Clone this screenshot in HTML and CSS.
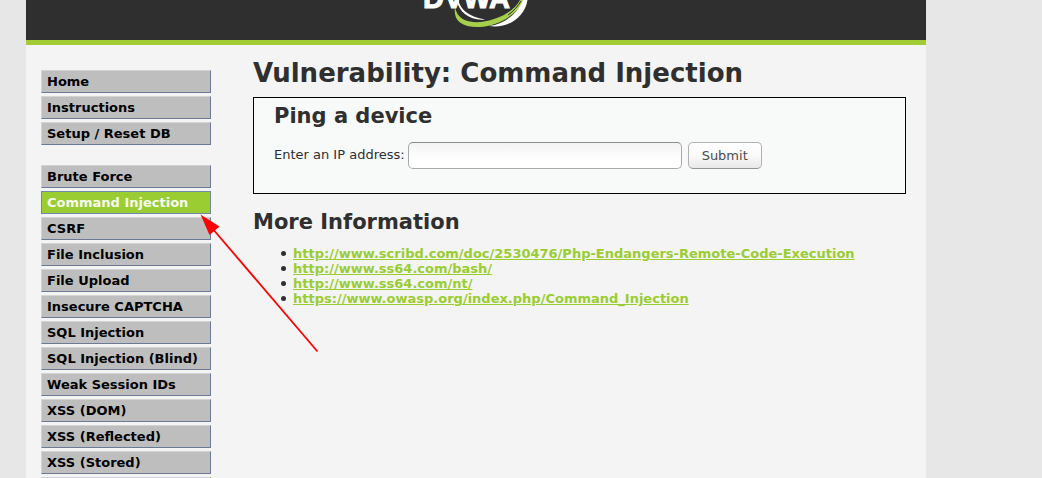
FILE: index.html
```html
<!DOCTYPE html>
<html lang="en">
<head>
<meta charset="utf-8">
<title>Vulnerability: Command Injection</title>
<link rel="stylesheet" href="styles.css">
</head>
<body>
<div class="container">
  <header class="header">
    <svg class="logo" width="110" height="30" viewBox="420 0 110 30" role="img" aria-label="DVWA">
      <text class="logo-text" x="422" y="8">DVWA</text>
      <path d="M458.500 0 C461 7 464 11 469 14" fill="none" stroke="#2f2f2f" stroke-width="1"/>
      <path d="M457 0 C460 10 468 17 484 19.500 C470 21 458 13 455.500 0 Z" fill="#fff"/>
      <path d="M454 7 C456 19 466 23 480 22 C498 20 513 11 519 0 L524 0 C515 15 498 26 478 27 C460 27.500 452 20 454 7 Z" fill="#a6cf4c"/>
      <path d="M488 26 C504 24 517 13 522 0 L526.500 0 C524 17 507 29 488 26 Z" fill="#fff"/>
      <path d="M507 15 C513 11 517 6 520 1" fill="none" stroke="#2f2f2f" stroke-width="1"/>
    </svg>
  </header>
  <div class="body">
    <nav class="menu">
      <ul class="menu-group">
        <li><a class="menu-item" href="#">Home</a></li>
        <li><a class="menu-item" href="#">Instructions</a></li>
        <li><a class="menu-item" href="#">Setup / Reset DB</a></li>
      </ul>
      <ul class="menu-group">
        <li><a class="menu-item" href="#">Brute Force</a></li>
        <li><a class="menu-item selected" href="#">Command Injection</a></li>
        <li><a class="menu-item" href="#">CSRF</a></li>
        <li><a class="menu-item" href="#">File Inclusion</a></li>
        <li><a class="menu-item" href="#">File Upload</a></li>
        <li><a class="menu-item" href="#">Insecure CAPTCHA</a></li>
        <li><a class="menu-item" href="#">SQL Injection</a></li>
        <li><a class="menu-item" href="#">SQL Injection (Blind)</a></li>
        <li><a class="menu-item" href="#">Weak Session IDs</a></li>
        <li><a class="menu-item" href="#">XSS (DOM)</a></li>
        <li><a class="menu-item" href="#">XSS (Reflected)</a></li>
        <li><a class="menu-item" href="#">XSS (Stored)</a></li>
        <li><a class="menu-item" href="#" aria-label="More"></a></li>
      </ul>
    </nav>
    <main class="main">
      <h1>Vulnerability: Command Injection</h1>
      <section class="panel">
        <h2>Ping a device</h2>
        <form class="form">
          <label for="ip">Enter an IP address:</label>
          <input class="field" id="ip" type="text">
          <button class="submit" type="submit">Submit</button>
        </form>
      </section>
      <h2>More Information</h2>
      <ul class="links">
        <li><a href="#">http://www.scribd.com/doc/2530476/Php-Endangers-Remote-Code-Execution</a></li>
        <li><a href="#">http://www.ss64.com/bash/</a></li>
        <li><a href="#">http://www.ss64.com/nt/</a></li>
        <li><a href="#">https://www.owasp.org/index.php/Command_Injection</a></li>
      </ul>
    </main>
  </div>
</div>
<svg class="arrow" width="120" height="140" viewBox="200 214 120 140" aria-hidden="true">
  <path d="M212 228 L317.500 351.500" stroke="#f00" stroke-width="1.800"/>
  <path d="M200.500 214.500 L219.500 226.500 L209.500 235 Z" fill="#f00"/>
</svg>
</body>
</html>
```
FILE: styles.css
```css
* {
  box-sizing: border-box;
}

html {
  height: 100%;
}

body {
  height: 100%;
  margin: 0;
  overflow: hidden;
  background: #e7e7e7;
  color: #2f2f2f;
  font: 13px/15px "DejaVu Sans", Verdana, sans-serif;
}

ul {
  margin: 0;
  padding: 0;
  list-style: none;
}

.container {
  max-width: 900px;
  min-height: 100%;
  margin-left: 26px;
  background: #f4f4f4;
}

.header {
  display: flex;
  justify-content: center;
  padding-bottom: 10px;
  border-bottom: 5px solid #a1cc33;
  background: #2f2f2f;
}

.logo-text {
  font: bold 29px "Liberation Sans", Arial, sans-serif;
  fill: #fff;
  stroke: #fff;
  stroke-width: 1px;
}

.body {
  display: flex;
  gap: 42px;
  padding: 13px 20px 0 15px;
}

.menu {
  display: flex;
  flex: 0 0 170px;
  flex-direction: column;
  gap: 20px;
  padding-top: 12px;
}

.menu-group {
  display: flex;
  flex-direction: column;
  gap: 3px;
}

.menu-item {
  display: block;
  min-height: 23px;
  padding: 3px 5px;
  border: 1px solid;
  border-color: #d3d3d3 #6b7a95 #6b7a95 #d3d3d3;
  background: #bebebe;
  color: #000;
  font-weight: bold;
  text-decoration: none;
}

.menu-item.selected {
  border-color: #7088a8;
  background: #9acd32;
  color: #f8faf0;
}

.main {
  flex: 1;
  min-width: 0;
}

h1 {
  margin: 0 0 9px;
  font-size: 26px;
  line-height: 30px;
}

h2 {
  margin: 0 0 12px;
  font-size: 21px;
  line-height: 24px;
}

.panel {
  margin-bottom: 16px;
  padding: 6px 20px 24px;
  border: 1px solid #000;
  background: #f8faf9;
}

.panel h2 {
  margin-bottom: 14px;
}

.form {
  display: flex;
  align-items: center;
}

.form label {
  padding-bottom: 2px;
}

.field {
  width: 274px;
  height: 27px;
  margin: 0 6px 0 3px;
  padding: 0 6px;
  border: 1px solid #a9a9a9;
  border-top-color: #8c8c8c;
  border-radius: 5px;
  background: linear-gradient(#f3f3f3, #fff 70%);
  font: inherit;
}

.submit {
  height: 27px;
  padding: 0 13px;
  border: 1px solid #b0b2b1;
  border-bottom-color: #939393;
  border-radius: 5px;
  background: linear-gradient(#fff, #fafafa 50%, #e8e8e8);
  color: #4c4c4c;
  font: inherit;
}

.links {
  padding-left: 28px;
}

.links li {
  display: flex;
  align-items: center;
  gap: 7px;
}

.links li::before {
  flex: none;
  width: 5px;
  height: 5px;
  border-radius: 50%;
  background: #2f2f2f;
  content: "";
}

.links a {
  color: #9acd32;
  font-weight: bold;
}

.arrow {
  position: absolute;
  top: 214px;
  left: 200px;
  pointer-events: none;
}
```
